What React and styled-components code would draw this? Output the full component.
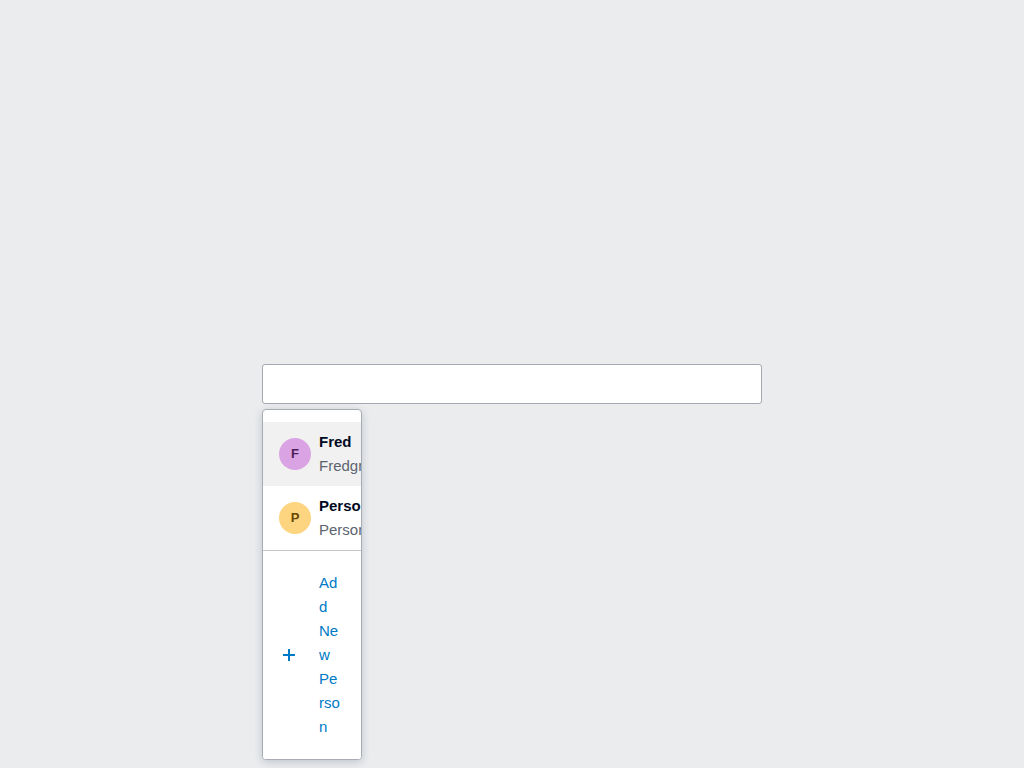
import React, { useState } from "react";
import styled, { createGlobalStyle } from "styled-components";

const GlobalStyle = createGlobalStyle`
  *, *::before, *::after {
    box-sizing: border-box;
  }
  body {
    margin: 0;
    background: #ebecee;
    color: #000a23;
    font-family: "Liberation Sans", Arial, sans-serif;
    font-size: 15px;
    line-height: 24px;
  }
`;

const Page = styled.main`
  min-height: 100vh;
  display: flex;
  align-items: center;
  justify-content: center;
`;

const Picker = styled.div`
  position: relative;
  width: 100%;
  max-width: 500px;
`;

const Field = styled.input`
  display: block;
  width: 100%;
  height: 40px;
  padding: 0 12px;
  border: 1px solid #a5a8b0;
  border-radius: 3px;
  background: #fff;
  color: inherit;
  font: inherit;
  outline: none;
`;

const Popup = styled.div`
  position: absolute;
  top: calc(100% + 5px);
  left: 0;
  width: 20%;
  padding-top: 12px;
  overflow: hidden;
  border: 1px solid #a9acb2;
  border-radius: 4px;
  background: #fff;
  box-shadow: 0 2px 8px rgba(0, 45, 70, 0.2);
`;

const People = styled.ul`
  margin: 0;
  padding: 0;
  list-style: none;
`;

const PersonButton = styled.button`
  display: flex;
  align-items: center;
  gap: 8px;
  width: 100%;
  height: 64px;
  padding: 8px 0 8px 16px;
  overflow: hidden;
  border: 0;
  background: ${({ $active }) => ($active ? "#f1f1f1" : "#fff")};
  color: inherit;
  font: inherit;
  text-align: left;
  cursor: pointer;
`;

const Avatar = styled.span`
  display: flex;
  flex: none;
  align-items: center;
  justify-content: center;
  width: 32px;
  height: 32px;
  border-radius: 50%;
  background: ${({ $fill }) => $fill};
  color: ${({ $ink }) => $ink};
  font-size: 13px;
  font-weight: 700;
`;

const Details = styled.span`
  display: flex;
  flex: 1;
  flex-direction: column;
  min-width: 0;
  overflow: hidden;
  white-space: nowrap;
`;

const Name = styled.span`
  font-weight: 700;
`;

const Contact = styled.span`
  color: #5c6470;
`;

const AddButton = styled.button`
  display: flex;
  align-items: center;
  gap: 24px;
  width: 100%;
  padding: 20px;
  border: 0;
  border-top: 1px solid #c4c7ca;
  background: #fff;
  color: #007ac6;
  font: inherit;
  text-align: left;
  cursor: pointer;
`;

const PlusIcon = styled.svg`
  flex: none;
  width: 12px;
  height: 12px;
`;

const AddLabel = styled.span`
  flex: 1;
  min-width: 0;
  overflow-wrap: anywhere;
`;

const people = [
  { name: "Fred", contact: "Fredgreen", fill: "#daa3e4", ink: "#4d1d57" },
  { name: "Person", contact: "Person", fill: "#fdd47f", ink: "#664700" },
];

export default function App() {
  const [query, setQuery] = useState("");
  const [active, setActive] = useState(0);

  return (
    <>
      <GlobalStyle />
      <Page>
        <Picker>
          <Field
            type="text"
            aria-label="Person"
            value={query}
            onChange={(e) => setQuery(e.target.value)}
          />
          <Popup>
            <People>
              {people.map((person, i) => (
                <li key={person.name}>
                  <PersonButton
                    type="button"
                    $active={i === active}
                    onMouseEnter={() => setActive(i)}
                    onClick={() => setQuery(person.name)}
                  >
                    <Avatar $fill={person.fill} $ink={person.ink}>
                      {person.name[0]}
                    </Avatar>
                    <Details>
                      <Name>{person.name}</Name>
                      <Contact>{person.contact}</Contact>
                    </Details>
                  </PersonButton>
                </li>
              ))}
            </People>
            <AddButton type="button">
              <PlusIcon viewBox="0 0 12 12" aria-hidden="true">
                <path d="M5 0h2v5h5v2H7v5H5V7H0V5h5z" fill="currentColor" />
              </PlusIcon>
              <AddLabel>Add New Person</AddLabel>
            </AddButton>
          </Popup>
        </Picker>
      </Page>
    </>
  );
}
